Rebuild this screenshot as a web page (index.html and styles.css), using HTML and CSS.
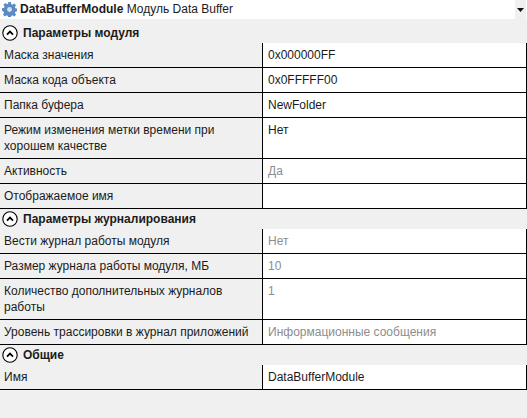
FILE: index.html
```html
<!DOCTYPE html>
<html>
<head>
<meta charset="utf-8">
<link rel="stylesheet" href="styles.css">
</head>
<body>
<div class="app">
  <div class="topbar">
    <svg class="gear" width="15" height="15" viewBox="0 0 16 16">
      <path fill="#5b8bc4" d="M6.6 0h2.8l.4 2.2 1.3.6 1.9-1.3 2 2-1.3 1.9.6 1.3 2.2.4v2.8l-2.2.4-.6 1.3 1.3 1.9-2 2-1.9-1.3-1.3.6-.4 2.2H6.6l-.4-2.2-1.3-.6-1.9 1.3-2-2 1.3-1.9-.6-1.3L0 9.4V6.6l2.2-.4.6-1.3L1.5 3l2-2 1.9 1.3 1.3-.6z"/>
      <circle cx="8" cy="8" r="2.6" fill="#d7e3f1"/>
    </svg>
    <span class="title"><b>DataBufferModule</b> Модуль Data Buffer</span>
    <span class="drop"><svg width="7" height="4" viewBox="0 0 7 4"><path d="M0 0h7L3.5 4z" fill="#111"/></svg></span>
  </div>
  <div class="grid">
    <div class="cat">
      <svg class="chev" width="16" height="16" viewBox="0 0 16 16"><circle cx="8" cy="8" r="7.2" fill="#fff" stroke="#000" stroke-width="1.1"/><path d="M5 9.6L8 6.6l3 3" fill="none" stroke="#000" stroke-width="1.8"/></svg>
      <span>Параметры модуля</span>
    </div>
    <div class="row"><div class="lbl">Маска значения</div><div class="val">0x000000FF</div></div>
    <div class="row"><div class="lbl">Маска кода объекта</div><div class="val">0x0FFFFF00</div></div>
    <div class="row"><div class="lbl">Папка буфера</div><div class="val">NewFolder</div></div>
    <div class="row"><div class="lbl">Режим изменения метки времени при хорошем качестве</div><div class="val">Нет</div></div>
    <div class="row"><div class="lbl">Активность</div><div class="val dis">Да</div></div>
    <div class="row"><div class="lbl">Отображаемое имя</div><div class="val"></div></div>
    <div class="cat">
      <svg class="chev" width="16" height="16" viewBox="0 0 16 16"><circle cx="8" cy="8" r="7.2" fill="#fff" stroke="#000" stroke-width="1.1"/><path d="M5 9.6L8 6.6l3 3" fill="none" stroke="#000" stroke-width="1.8"/></svg>
      <span>Параметры журналирования</span>
    </div>
    <div class="row"><div class="lbl">Вести журнал работы модуля</div><div class="val dis">Нет</div></div>
    <div class="row"><div class="lbl">Размер журнала работы модуля, МБ</div><div class="val dis">10</div></div>
    <div class="row"><div class="lbl">Количество дополнительных журналов работы</div><div class="val dis">1</div></div>
    <div class="row"><div class="lbl">Уровень трассировки в журнал приложений</div><div class="val dis">Информационные сообщения</div></div>
    <div class="cat">
      <svg class="chev" width="16" height="16" viewBox="0 0 16 16"><circle cx="8" cy="8" r="7.2" fill="#fff" stroke="#000" stroke-width="1.1"/><path d="M5 9.6L8 6.6l3 3" fill="none" stroke="#000" stroke-width="1.8"/></svg>
      <span>Общие</span>
    </div>
    <div class="row"><div class="lbl">Имя</div><div class="val">DataBufferModule</div></div>
  </div>
</div>
</body>
</html>
```
FILE: styles.css
```css
html, body {
  margin: 0;
  padding: 0;
  background: #f0f0f0;
}
body {
  font-family: "Liberation Sans", Arial, sans-serif;
  font-size: 12px;
  color: #1b1b1b;
  width: 527px;
  height: 418px;
  overflow: hidden;
}
.topbar {
  display: flex;
  align-items: center;
  height: 19px;
  background: #fff;
  padding-left: 2px;
  gap: 3px;
}
.gear { flex: none; }
.title { flex: 1; white-space: nowrap; line-height: 19px; }
.title b { font-weight: 700; }
.drop {
  width: 11px;
  height: 19px;
  margin-right: 1px;
  background: #f0f0f0;
  display: flex;
  align-items: center;
  justify-content: center;
}
.grid {
  padding-top: 4px;
}
.cat {
  display: flex;
  align-items: center;
  height: 20px;
  padding-left: 2px;
  gap: 5px;
  font-weight: 700;
}
.chev { flex: none; }
.row {
  display: flex;
  border-bottom: 1px solid #000;
}
.lbl {
  width: 258px;
  padding: 4px 0 4px 4px;
  line-height: 16px;
  border-right: 1px solid #000;
  background: #f0f0f0;
}
.val {
  flex: 1;
  padding: 4px 0 4px 5px;
  line-height: 16px;
  background: #fff;
  border-right: 1px solid #000;
}
.dis { color: #8d8d8d; }
```
